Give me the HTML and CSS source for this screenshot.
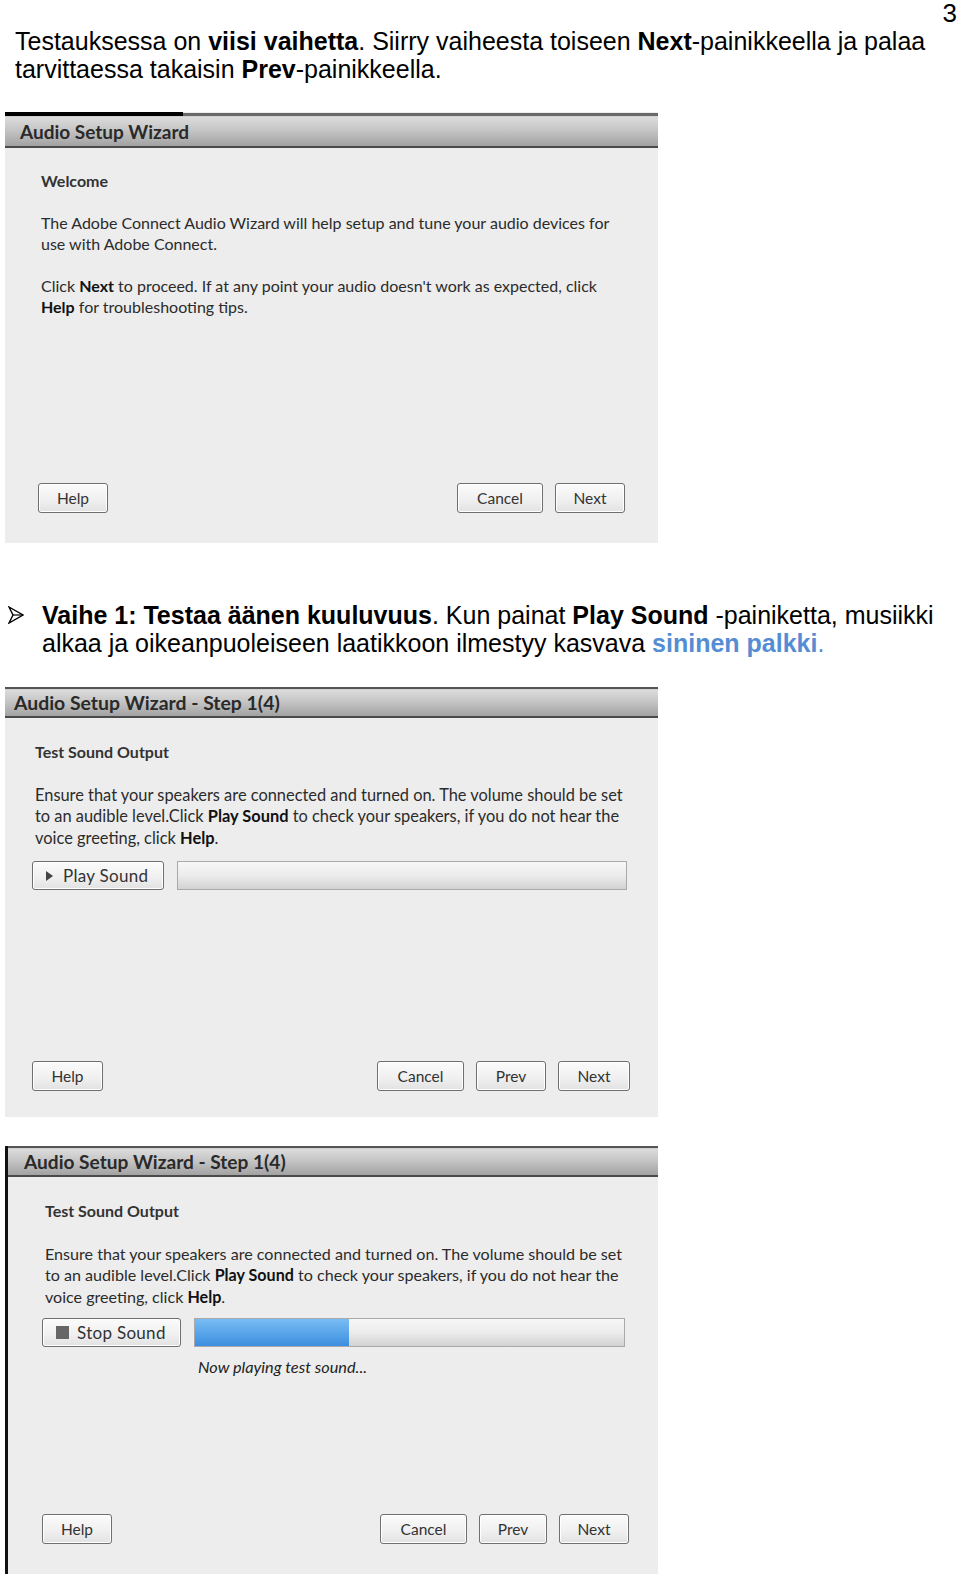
FILE: index.html
```html
<!DOCTYPE html>
<html>
<head>
  <title>Audio Setup Wizard</title>
  <link rel="stylesheet" href="styles.css">
</head>
<body>
  <div class="pagenum">3</div>

  <p class="intro">Testauksessa on <b>viisi vaihetta</b>. Siirry vaiheesta toiseen <b>Next</b>-painikkeella ja palaa tarvittaessa takaisin <b>Prev</b>-painikkeella.</p>

  <!-- welcome screen -->
  <div class="wizard first">
    <div class="topline"><span class="dark"></span></div>
    <div class="titlebar">Audio Setup Wizard</div>
    <div class="content">
      <p class="heading">Welcome</p>
      <p>The Adobe Connect Audio Wizard will help setup and tune your audio devices for use with Adobe Connect.</p>
      <p>Click <b>Next</b> to proceed. If at any point your audio doesn't work as expected, click <b>Help</b> for troubleshooting tips.</p>
    </div>
    <div class="footer">
      <button class="btn w70">Help</button>
      <div class="right">
        <button class="btn w86">Cancel</button>
        <button class="btn w70">Next</button>
      </div>
    </div>
  </div>

  <div class="step">
    <svg class="arrow" width="16" height="18" viewBox="0 0 16 18">
      <polygon points="1,1 15,9 1,17 5,9" fill="#fff" stroke="#000" stroke-width="1.4" stroke-linejoin="miter"/>
      <line x1="5" y1="9" x2="15" y2="9" stroke="#000" stroke-width="1.2"/>
    </svg>
    <p><b>Vaihe 1: Testaa äänen kuuluvuus</b>. Kun painat <b>Play Sound</b> -painiketta, musiikki alkaa ja oikeanpuoleiseen laatikkoon ilmestyy kasvava <span class="blue"><b>sininen palkki</b>.</span></p>
  </div>

  <!-- step 1, idle -->
  <div class="wizard second">
    <div class="topline"></div>
    <div class="titlebar">Audio Setup Wizard - Step 1(4)</div>
    <div class="content">
      <p class="heading">Test Sound Output</p>
      <p>Ensure that your speakers are connected and turned on. The volume should be set to an audible level.Click <b>Play Sound</b> to check your speakers, if you do not hear the voice greeting, click <b>Help</b>.</p>
      <div class="soundrow">
        <button class="btn sound play"><span class="tri"></span>Play Sound</button>
        <div class="meter"></div>
      </div>
    </div>
    <div class="footer">
      <button class="btn w71">Help</button>
      <div class="right">
        <button class="btn w87">Cancel</button>
        <button class="btn w70">Prev</button>
        <button class="btn w72">Next</button>
      </div>
    </div>
  </div>

  <!-- step 1, playing -->
  <div class="wizard third">
    <div class="topline"></div>
    <div class="titlebar">Audio Setup Wizard - Step 1(4)</div>
    <div class="content">
      <p class="heading">Test Sound Output</p>
      <p>Ensure that your speakers are connected and turned on. The volume should be set to an audible level.Click <b>Play Sound</b> to check your speakers, if you do not hear the voice greeting, click <b>Help</b>.</p>
      <div class="soundrow">
        <button class="btn sound stop"><span class="sq"></span>Stop Sound</button>
        <div class="meter"><div class="fill" style="width: 36%"></div></div>
      </div>
      <p class="status">Now playing test sound...</p>
    </div>
    <div class="footer">
      <button class="btn w70">Help</button>
      <div class="right">
        <button class="btn w87">Cancel</button>
        <button class="btn w68">Prev</button>
        <button class="btn w70">Next</button>
      </div>
    </div>
  </div>
</body>
</html>
```

FILE: styles.css
```css
body {
  margin: 0;
  font-family: "Liberation Sans", Arial, sans-serif;
  color: #000;
  background: #fff;
}

.pagenum {
  position: absolute;
  top: 0;
  right: 3px;
  font-size: 26px;
  line-height: 26px;
}

.intro {
  margin: 0;
  padding: 27px 20px 0 15px;
  font-size: 25px;
  line-height: 28px;
}

/* dialog boxes */
.wizard {
  width: 653px;
  margin-left: 5px;
  background: #ededed;
  font-family: Lato, "Open Sans", sans-serif;
  font-size: 16px;
  color: #2b2b2b;
  display: flex;
  flex-direction: column;
}

.first {
  margin-top: 29px;
  height: 431px;
}

.second {
  margin-top: 30px;
  height: 430px;
  font-size: 16.4px;
}

.third {
  margin-top: 29px;
  height: 428px;
  width: 650px;
  border-left: 3px solid #111;
  font-size: 16.1px;
}

.topline {
  height: 2px;
  background: #555;
  border-bottom: 1px solid #cfcfcf;
}

.first .topline {
  height: 3px;
  margin-top: 1px;
  position: relative;
  background: #6a6a6a;
}

.first .topline .dark {
  position: absolute;
  left: 0;
  top: -1px;
  width: 178px;
  height: 4px;
  background: #000;
}

.titlebar {
  height: 26px;
  line-height: 26px;
  background: linear-gradient(#dcdcdc, #c5c5c5 45%, #a2a2a2);
  border-bottom: 2px solid #4a4a4a;
  font-size: 19px;
  font-weight: bold;
  color: #2a2a2a;
}

.first .titlebar {
  height: 29px;
  line-height: 29px;
  padding-left: 15px;
}
.second .titlebar { padding-left: 9px; font-size: 19.4px; }
.third .titlebar { padding-left: 16px; font-size: 19.1px; }

.content {
  flex: 1;
}

.content p {
  margin: 0 0 21px 0;
  line-height: 21px;
}

.content p.heading {
  font-weight: bold;
  font-size: 16px;
  color: #333;
}

.content b {
  color: #111;
}

.first .content { padding: 22px 35px 0 36px; }
.second .content { padding: 23px 28px 0 30px; }
.third .content { padding: 23px 28px 0 37px; }

.second .content p,
.third .content p { line-height: 21.5px; }

.soundrow {
  display: flex;
  gap: 13px;
  margin: -8px 0 0 -3px;
}

.second .soundrow { margin-right: 3px; }
.third .soundrow { margin: -10px 5px 0 -3px; gap: 13px; }

.meter {
  flex: 1;
  height: 27px;
  border: 1px solid #a9a9a9;
  background: linear-gradient(#f7f7f7, #ececec 50%, #d2d2d2);
}

.meter .fill {
  height: 100%;
  background: linear-gradient(#79bdf3, #5aa6ea 50%, #3d8ee0);
}

.content p.status {
  margin: 9px 0 0 153px;
  font-style: italic;
  font-size: 16.3px;
  color: #222;
}

/* buttons */
.btn {
  height: 30px;
  padding: 0;
  border: 1px solid #6f6f6f;
  border-radius: 3px;
  background: linear-gradient(#fbfbfb, #efefef 60%, #e2e2e2);
  font-family: Lato, "Open Sans", sans-serif;
  font-size: 15.5px;
  color: #333;
  box-shadow: inset 0 0 0 1px #fff;
}

.w68 { width: 68px; }
.w70 { width: 70px; }
.w71 { width: 71px; }
.w72 { width: 72px; }
.w86 { width: 86px; }
.w87 { width: 87px; }

.sound {
  display: flex;
  align-items: center;
  height: 29px;
  font-size: 17px;
  letter-spacing: 0.3px;
}

.play {
  width: 132px;
  padding-left: 13px;
}

.stop {
  width: 139px;
  padding-left: 13px;
}

.tri {
  width: 0;
  height: 0;
  border-top: 5px solid transparent;
  border-bottom: 5px solid transparent;
  border-left: 7px solid #444;
  margin-right: 10px;
}

.sq {
  width: 13px;
  height: 13px;
  background: #666;
  margin-right: 8px;
}

.footer {
  display: flex;
  justify-content: space-between;
}

.footer .right {
  display: flex;
  gap: 12px;
}

.first .footer { padding: 0 33px 30px 33px; }
.second .footer { padding: 0 28px 26px 27px; }
.third .footer { padding: 0 29px 30px 34px; }

/* bullet text */
.step {
  display: flex;
  align-items: flex-start;
  margin-top: 58px;
  padding-right: 20px;
}

.arrow {
  margin: 5px 0 0 8px;
  flex: none;
}

.step p {
  margin: 0 0 0 18px;
  font-size: 25px;
  line-height: 28px;
}

.blue {
  color: #548dd4;
}
```
